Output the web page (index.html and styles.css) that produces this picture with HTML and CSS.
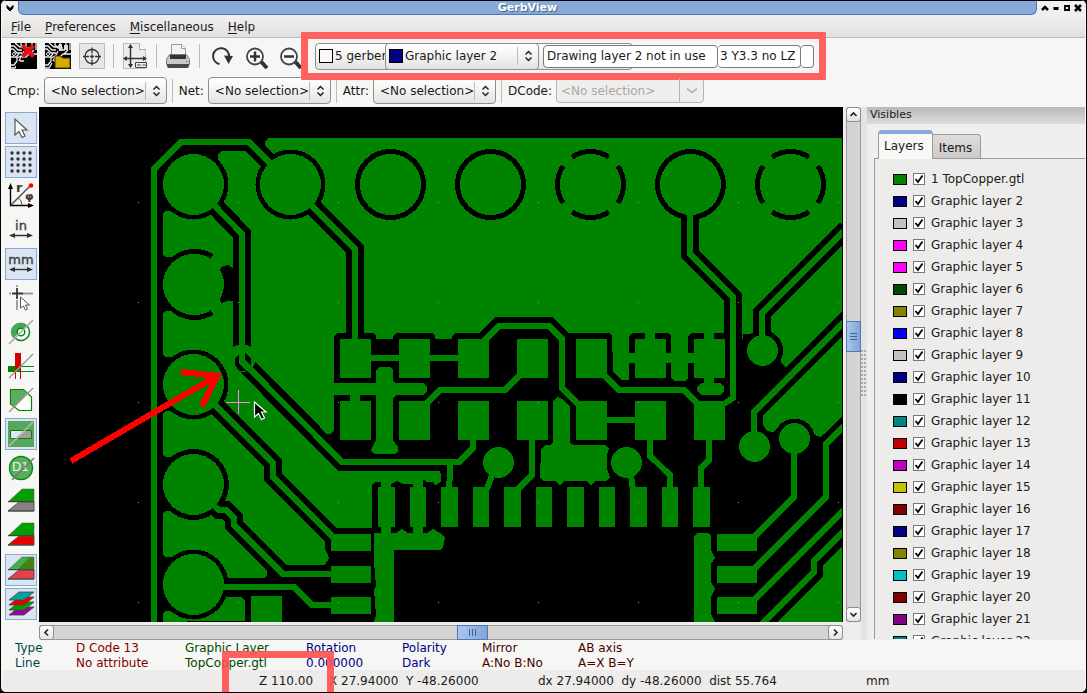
FILE: index.html
```
<!DOCTYPE html>
<html lang="en">
<head>
<meta charset="utf-8">
<title>GerbView</title>
<link rel="stylesheet" href="styles.css">
</head>
<body>
<svg class="defs" aria-hidden="true">
  <symbol id="updown" viewBox="0 0 9 12"><path d="M1.500 4.500 4.500 1.500 7.500 4.500M1.500 7.500 4.500 10.500 7.500 7.500" fill="none" stroke="#222" stroke-width="1.500"/></symbol>
  <symbol id="board" viewBox="0 0 26 26"><path fill="#000" d="M0 0h26v26H0z"/><path fill="none" stroke="#eee" stroke-width="1.300" d="M0 3h3l4 4h4M0 6h2l4 4h5M4 0l5 4h5M10 0v2l3 3M0 14h5l3-3M0 22h3l3-4v-3l4-2M0 25h4l3-5M13 8l-3 6-2 4M15 0v4M21 0v5M25 0v7M17 4v3h3M23 7l-4 4M11 14h4l3-3h8M9 18h4"/><circle cx="3" cy="11" r="1.500" fill="none" stroke="#eee"/><circle cx="14" cy="4" r="1.500" fill="none" stroke="#eee"/></symbol>
</svg>
<div class="window">
  <header class="titlebar">
    <button class="winbtn" aria-label="Window menu"><svg width="8" height="8" viewBox="0 0 8 8"><path d="M1 1.500 4 4.500 7 1.500V4L4 7 1 4z" fill="#000" stroke="#000"/></svg></button>
    <h1 class="title">GerbView</h1>
    <div class="wincontrols">
      <button class="winbtn" aria-label="Shade"><svg width="8" height="8" viewBox="0 0 8 8"><path d="M1 6 4 3 7 6" fill="none" stroke="#000" stroke-width="2.500"/></svg></button>
      <button class="winbtn" aria-label="Minimize"><svg width="8" height="8" viewBox="0 0 8 8"><path d="M1.500 3h5v3h-5z"/></svg></button>
      <button class="winbtn" aria-label="Maximize"><svg width="8" height="8" viewBox="0 0 8 8"><path d="M2 2h4v4H2z" fill="none" stroke="#000" stroke-width="2"/></svg></button>
      <button class="winbtn" aria-label="Close"><svg width="8" height="8" viewBox="0 0 8 8"><path d="M1 1 7 7M7 1 1 7" stroke="#000" stroke-width="2.500"/></svg></button>
    </div>
  </header>

  <nav class="menubar">
    <button class="menu"><u>F</u>ile</button>
    <button class="menu"><u>P</u>references</button>
    <button class="menu"><u>M</u>iscellaneous</button>
    <button class="menu"><u>H</u>elp</button>
  </nav>

  <div class="toolbar">
    <button class="tool" aria-label="Erase all layers"><svg viewBox="0 0 26 26"><use href="#board"/><path d="M5 26v-5l2-2h16l3 3v4z"/><path d="M10 4l3-3 4 4 4-4 3 3-4 4 4 4-3 3-4-4-4 4-3-3 4-4z" fill="#e81010"/></svg></button>
    <button class="tool" aria-label="Load gerber file"><svg viewBox="0 0 26 26"><use href="#board"/><path d="M10 13h6l1.500 2H25v10H10z" fill="#d6ab00" stroke="#3c3000"/><path d="M14 1h3v7h-3zM19 2h4v5h-4z" fill="#ddd"/></svg></button>
    <button class="tool" aria-label="Set page"><svg viewBox="0 0 26 26"><path d="M.5.500h25v25H.5z" fill="#e6e6e6" stroke="#bbb"/><circle cx="13" cy="13.500" r="7" fill="none" stroke="#333" stroke-width="1.300"/><path d="M13 4.500v6M13 16.500v6M4 13.500h6M16 13.500h6M11 13.500h4M13 11.500v4" stroke="#333" stroke-width="1.300"/></svg></button>
    <span class="sep"></span>
    <button class="tool" aria-label="Page settings"><svg viewBox="0 0 26 26"><path d="M1.500.500h16l6 6v19h-22z" fill="#ececec" stroke="#bbb"/><path d="M17.500.500v6h6" fill="#fff" stroke="#aaa"/><path d="M8.500 2v22M2 15.500h22" stroke="#333" stroke-width="1.500"/><path d="M8.500 1 6 5h5zM8.500 25 6 21h5zM1 15.500l4-2.500v5zM25 15.500 21 13v5z" fill="#333"/><path d="M13.500 19.500h11v5h-11zM15 22h4M20.500 22h3" stroke="#444" fill="#eee"/></svg></button>
    <span class="sep"></span>
    <button class="tool" aria-label="Print"><svg viewBox="0 0 26 26"><path d="M6.500 14V1.500h10l4 4V14z" fill="#f2f2f2" stroke="#999"/><path d="M16.500 1.500v4h4" fill="#fff" stroke="#999"/><path d="M4.500 11.500h17l3 5v5h-23v-5z" fill="#c9c9c9" stroke="#777"/><path d="M5 12h16v4H5z" fill="#333"/><path d="M2 21h22v2q0 2-2 2H4q-2 0-2-2z" fill="#4a4a4a"/><path d="M21 18.500h2" stroke="#5c2"/></svg></button>
    <span class="sep"></span>
    <div class="zoomtools">
      <button class="tool" aria-label="Redraw"><svg viewBox="0 0 26 26"><path d="M9.500 21A8 8 0 1 1 19 14" fill="none" stroke="#333" stroke-width="2"/><path d="M14 12.500 23 13l-4.500 8z" fill="#333"/></svg></button>
      <button class="tool" aria-label="Zoom in"><svg viewBox="0 0 26 26"><path d="M16.500 18 23 25" stroke="#333" stroke-width="4"/><circle cx="11" cy="13.500" r="8" fill="#fafafa" stroke="#444" stroke-width="1.800"/><path d="M6 13.500h10M11 8.500v10" stroke="#333" stroke-width="2.500"/></svg></button>
      <button class="tool" aria-label="Zoom out"><svg viewBox="0 0 26 26"><path d="M16.500 18 23 25" stroke="#333" stroke-width="4"/><circle cx="11" cy="13.500" r="8" fill="#fafafa" stroke="#444" stroke-width="1.800"/><path d="M6 13.500h10" stroke="#333" stroke-width="2.500"/></svg></button>
    </div>

    <div class="layerbar">
      <label class="combo combo-files"><i class="chip chip-white"></i><select aria-label="Gerber files"><option>5 gerber files</option></select></label>
      <label class="combo combo-layer"><i class="chip c-navy"></i><select aria-label="Active layer"><option>Graphic layer 2</option></select><svg class="arrows"><use href="#updown"/></svg></label>
      <input class="field field-info" aria-label="Layer info" value="Drawing layer 2 not in use">
      <input class="field field-format" aria-label="Format" value="3 Y3.3 no LZ">
      <input class="field field-end" aria-label="Extra">
    </div>
  </div>

  <div class="selectbar">
    <label class="lbl" for="cmp">Cmp:</label>
    <span class="combo combo-sel"><select id="cmp"><option>&lt;No selection&gt;</option></select><svg class="arrows"><use href="#updown"/></svg></span>
    <span class="sep"></span>
    <label class="lbl" for="net">Net:</label>
    <span class="combo combo-sel"><select id="net"><option>&lt;No selection&gt;</option></select><svg class="arrows"><use href="#updown"/></svg></span>
    <span class="sep"></span>
    <label class="lbl" for="attr">Attr:</label>
    <span class="combo combo-sel"><select id="attr"><option>&lt;No selection&gt;</option></select><svg class="arrows"><use href="#updown"/></svg></span>
    <span class="sep"></span>
    <label class="lbl" for="dcode">DCode:</label>
    <span class="combo combo-off"><select id="dcode" disabled><option>&lt;No selection&gt;</option></select><svg class="arrows" viewBox="0 0 12 12"><path d="M1 4 6 8 11 4" fill="none" stroke="#aaa" stroke-width="1.500"/></svg></span>
  </div>

  <main class="main">
    <div class="sidebar">
      <button class="side on" aria-label="Select"><svg viewBox="0 0 26 26"><path d="M7 4v16l4-3.500 3 6 3-1.500-3-6h5z" fill="#fff" stroke="#555" stroke-width="1.200"/></svg></button>
      <button class="side on" aria-label="Grid"><svg viewBox="0 0 26 26"><path d="M4 4h20M4 10h20M4 16h20M4 22h20" stroke="#333" stroke-width="3.400" stroke-linecap="round" stroke-dasharray="0.010 6"/></svg></button>
      <button class="side" aria-label="Polar coordinates"><svg viewBox="0 0 26 26"><path d="M2.500 23V3M2 22.500h22" stroke="#000" stroke-width="1.400"/><path d="M2.500 0 0 6h5zM26 22.500 20 20v5z"/><path d="M3 22 22 3" stroke="#555" stroke-width="1.600"/><circle cx="23" cy="2.500" r="2.300" fill="#f00"/><path d="M10 15q4 2 4 7" fill="none" stroke="#555"/><text x="8" y="9" class="glyph">r</text><text x="17" y="17" class="glyph phi">φ</text></svg></button>
      <button class="side" aria-label="Inches"><svg viewBox="0 0 26 26"><text x="13" y="13" class="unit">in</text><path d="M3 18.500h20" stroke="#333" stroke-width="1.400"/><path d="M1 18.500 7 16v5zM25 18.500 19 16v5z" fill="#333"/></svg></button>
      <button class="side on" aria-label="Millimeters"><svg viewBox="0 0 26 26"><text x="13" y="13" class="unit">mm</text><path d="M3 18.500h20" stroke="#333" stroke-width="1.400"/><path d="M1 18.500 7 16v5zM25 18.500 19 16v5z" fill="#333"/></svg></button>
      <button class="side" aria-label="Cursor shape"><svg viewBox="0 0 26 26"><path d="M1 8.500h2M9 0v2M15 8.500h10M9 15v10" stroke="#999" stroke-width="1.800"/><path d="M4 8.500h11M9 3v11" stroke="#333" stroke-width="1.800"/><path d="M12.500 12v11l3-2 2 4 2-1-2-4h4z" fill="#fff" stroke="#555"/></svg></button>
      <button class="side" aria-label="Flashed items"><svg viewBox="0 0 26 26"><circle cx="13" cy="13" r="8.500" fill="#fff" stroke="#008c14" stroke-width="1.500"/><path d="M5 19A9 9 0 0 1 19 7z" fill="#4aa455"/><circle cx="13" cy="13" r="3.800" fill="#fff" stroke="#008c14" stroke-width="1.500"/><path d="M1 25 25 1" stroke="#aaa" stroke-width="1.600"/></svg></button>
      <button class="side" aria-label="Lines"><svg viewBox="0 0 26 26"><path d="M0 13h12v6H0z" fill="#008400"/><path d="M7 0h6v13l-6 6z" fill="#d40000"/><path d="M12 13.500h14M11 18.500h15" stroke="#008c14"/><path d="M7.500 17v9M12.500 12v14" stroke="#d40000"/><path d="M1 25 25 1" stroke="#999" stroke-width="1.400"/></svg></button>
      <button class="side" aria-label="Polygons"><svg viewBox="0 0 26 26"><path d="M2.500 2.500h13l8 7.500v13.500H11L2.500 17z" fill="#fff" stroke="#008400" stroke-width="1.200"/><path d="M3 3h12.500l4 4L6.500 20 3 17z" fill="#5cad60"/><path d="M1 25 25 1" stroke="#999" stroke-width="1.400"/></svg></button>
      <button class="side on" aria-label="Negative objects"><svg viewBox="0 0 26 26"><path d="M0 0h26v26H0z" fill="#56a660"/><path d="M2.500 9.500h21v8h-21z" fill="#dbe6f4" stroke="#008400"/><path d="M17 10h6v7H9.500z" fill="#a0a0a0"/><path d="M1 25 25 1" stroke="#b4b4b4" stroke-width="1.600"/></svg></button>
      <button class="side" aria-label="D codes"><svg viewBox="0 0 26 26"><circle cx="13" cy="13" r="11.500" fill="#5cad60" stroke="#008c14" stroke-width="1.400"/><text x="4" y="16" class="dcode">D1</text><path d="M4 25 26 3" stroke="#777" stroke-width="1.400"/></svg></button>
      <button class="side" aria-label="Raw mode"><svg viewBox="0 0 26 26"><path d="M0 22 11 13h15v9z" fill="#868282" stroke="#555"/><path d="M0 13 14 0h12v13z" fill="#00a000" stroke="#555" stroke-width=".5"/><path d="M0 12.500h26M0 22h26" stroke="#444" stroke-width="1.200"/></svg></button>
      <button class="side" aria-label="Stacked mode"><svg viewBox="0 0 26 26"><path d="M0 22 11 13h15v9z" fill="#e80000" stroke="#555"/><path d="M0 13 14 0h12v13z" fill="#00a000" stroke="#555" stroke-width=".5"/><path d="M0 12.500h26M0 22h26" stroke="#444" stroke-width="1.200"/></svg></button>
      <button class="side on" aria-label="Transparency mode"><svg viewBox="0 0 26 26"><path d="M0 22 11 13h15v9z" fill="#e84048" stroke="#555"/><path d="M0 13 14 0h12v13z" fill="#40b048" stroke="#555" stroke-width=".5"/><path d="M10 12 22 0h4v12z" fill="#448414"/><path d="M0 12.500h26M0 22h26" stroke="#444" stroke-width="1.200"/></svg></button>
      <button class="side on" aria-label="Layers manager"><svg viewBox="0 0 26 26" stroke="#444" stroke-width=".8"><path d="M1 24 11 16h15L16 24z" fill="#a000a0"/><path d="M1 19 11 11h15L16 19z" fill="#00a000"/><path d="M1 14 11 6h15L16 14z" fill="#e80000"/><path d="M1 9 11 1h15L16 9z" fill="#00a0a0"/></svg></button>
    </div>

    <div class="view">
      <svg class="canvas" viewBox="39 107 804 515" preserveAspectRatio="xMinYMin slice" role="img" aria-label="Top copper layer">
        <defs>
          <pattern id="grid" width="100" height="100" patternUnits="userSpaceOnUse"><path d="M38 2h1v1h-1z" fill="#969696"/></pattern>
          <path id="casedTraces" d="M154 630V169L181 142H249L275 168M212 203 242 234V361L342 462H459L473 448V438M300 194 355 249V345M212 402 273 463V477L335 539M212 504 219 510H226L234 518V525L283 574H335M215 587H294L312 605H335M690 205V254L733 297V398L716 409M762 345V313L846 229M754 440V412L848 318M365 358H465M478 347 499 326H549L562 339V388L582 408"/>
        </defs>
        <rect x="39" y="107" width="804" height="515"/>
        <g shape-rendering="crispEdges">
          <g class="cu">
            <path d="M269 138H842V314L791 366 786 367 781 363 779 350 753 334H743V339H334V431L330 434H327L345 462H436L441 474V482L436 485 432 482H427L424 480H420V484H408L403 484 397 481 391 484H372V528H336L325 540V548L329 558 325 565H286L267 570V576L264 578H232L225 596 229 597H241L245 600V621H172V211L193 184 218 165V154L221 151H245L262 167 275 160 265 147V141Z"/>
            <rect x="163" y="211" width="24" height="46" rx="4"/>
            <rect x="163" y="311" width="24" height="46" rx="4"/>
            <rect x="163" y="411" width="24" height="46" rx="4"/>
            <rect x="163" y="511" width="24" height="46" rx="4"/>
            <rect x="163" y="611" width="24" height="16" rx="4"/>
            <path d="M843 330 763 410V425L767 431 773 432 777 428H812L815 435 820 437 824 434 843 416Z"/>
          </g>
          <g>
            <path d="M221 267 228 265 233 268V301L227 301 221 303 216 285Z"/>
            <path d="M334 336 337 333H373L376 336V349H393V336L396 333H433L435 336V349H452V336L455 333H556V384H334ZM565 333H609L612 336V384H565ZM325 528H374V550H325ZM629 336 632 333H668L671 336V384H629ZM688 336 691 333H730V384H688Z"/>
          </g>
          <circle cx="193.500" cy="184.500" r="35"/><circle cx="290.500" cy="184.500" r="35"/><circle cx="193.500" cy="384.500" r="35"/><circle cx="193.500" cy="484.500" r="35.500"/><circle cx="193.500" cy="584.500" r="35"/><circle cx="690.500" cy="184.500" r="35.500"/><circle cx="762.500" cy="350.500" r="20.500"/><circle cx="794.500" cy="438.500" r="20"/>
          <use href="#casedTraces" class="casing"/>
          <g class="ring">
            <circle cx="390.500" cy="184.500" r="33"/><circle cx="490.500" cy="184.500" r="33"/>
            <circle cx="590.500" cy="184.500" r="33" pathLength="360" stroke-dasharray="68 22" stroke-dashoffset="34"/>
            <circle cx="790.500" cy="184.500" r="33" pathLength="360" stroke-dasharray="68 22" stroke-dashoffset="34"/>
            <path d="M212 256.500A33 33 0 1 0 212 312.500"/>
          </g>
          <use href="#casedTraces" class="trace"/>
          <path class="trace" d="M522 373 505 390H440L425 405M602 373 619 390H684L701 407M600 420H640M450 463V472L449 490M493 473 486 491M532 435V475L517 490M650 435V456L670 475V490M709 435V460L701 468V490M631 475 633 490M794 445V497L750 541M846 424 826 444V497L750 573M846 508 750 604M846 529 814 561V572L760 626"/>
          <g class="cu">
            <circle cx="193.500" cy="184.500" r="30.500"/><circle cx="193.500" cy="284.500" r="30.500"/><circle cx="193.500" cy="384.500" r="30.500"/><circle cx="193.500" cy="484.500" r="30.500"/><circle cx="193.500" cy="584.500" r="30.500"/><circle cx="290.500" cy="184.500" r="30.500"/><circle cx="690.500" cy="184.500" r="30.500"/>
            <circle cx="762.500" cy="350.500" r="15.500"/><circle cx="754.500" cy="446.500" r="15.500"/><circle cx="794.500" cy="438.500" r="15.500"/><circle cx="498.500" cy="462.500" r="15.500"/><circle cx="626.500" cy="462.500" r="15.500"/>
            <path d="M340 339h31v39h-31zM399 339h31v39h-31zM458 339h31v39h-31zM517 339h31v39h-31zM576 339h31v39h-31zM635 339h31v39h-31zM694 339h31v39h-31zM399 401h31v39h-31zM458 401h31v39h-31zM517 401h31v39h-31zM576 401h31v39h-31zM635 401h31v39h-31zM694 401h31v39h-31z"/>
            <path d="M378 487h17v40h-17zM410 487h16v40h-16zM441 487h17v40h-17zM473 487h16v40h-16zM504 487h17v40h-17zM536 487h16v40h-16zM567 487h17v40h-17zM599 487h16v40h-16zM630 487h17v40h-17zM662 487h16v40h-16zM693 487h17v40h-17z"/>
            <path d="M331 534h40v17h-40zM331 566h40v17h-40zM331 597h40v17h-40zM717 534h40v17h-40zM717 566h40v17h-40zM717 597h40v17h-40zM251 596h31v26h-31z"/>
            <path d="M612 331H629V380H621L613 372ZM671 331H688V378L685 381H674L671 378ZM645 331h10v10h-10zM704 331h10v10h-10zM628 353h9v10h-9zM664 353h8v10h-8zM687 353h9v10h-9zM704 376h10v8h-10z"/>
            <path d="M701 383H720L724 387V391L720 395H701L697 391V387Z"/>
            <path d="M328 383H376V370L380 367H390L393 370V381L396 383H424L427 387V391L424 395H397L393 398V440L398 447V452L395 454H374L371 450V446L376 440V395H334V410H328Z"/>
            <path d="M553 401 558 397 564 400 570 407V443L574 445H606L609 449 607 455V468L610 478 606 481H596L591 485 586 481H565L560 485 555 481H543L540 478 541 449 545 445H550L553 442Z"/>
            <path d="M381 480h10v60h-10zM413 480h10v60h-10zM374 533H396L402 529 408 533H427L433 529 440 533 445 537 443 548 440 550H394V622H374L376 615 374 590 376 586 374 562Z"/>
            <path d="M694 622V536L697 533H708L711 536V550L715 558 711 564V582L715 589 711 597V614L715 622ZM843 545 823 565V576L777 622H843Z"/>
          </g>
          <path d="M334 398 337 395H350V401H340V415H334ZM360 395H373L376 398V415H371V401H360ZM334 425H340V440H371V425H376V440L371 450H334ZM372 486 375 482H381V487H378V502H372ZM372 512H378V527H381V533H372Z"/>
          <path class="cu" d="M340 401h31v39h-31zM350 394h10v10h-10z"/>
          <circle class="cu" cx="242" cy="358" r="14"/>
          <path d="M239 354 235 358V365L239 371H246L239 364ZM245 353 251 359V366L245 360Z"/>
          <path d="M233 345v-7h6v7zM245 345v-7h6v7z"/>
        </g>
        <rect x="39" y="107" width="804" height="515" fill="url(#grid)"/>
        <path d="M842 107h1v515h-1z"/>
        <path d="M226 402.500h24M238.500 390v24" stroke="#ff84ff"/>
        <path d="M254.500 402v15l4-3.500 3 6 3-1.500-3-6h4.500z" stroke="#fff" stroke-width="1.200"/>
        <path d="M71 461 215 377M181 372 217 376 202 406" fill="none" stroke="#f00" stroke-width="6" shape-rendering="crispEdges"/>
      </svg>
      <div class="vscroll">
        <button class="sbtn" aria-label="Scroll up"><svg width="9" height="9" viewBox="0 0 9 9"><path d="M1.500 6 4.500 3 7.500 6" fill="none" stroke="#222" stroke-width="1.600"/></svg></button>
        <span class="thumb thumb-v"></span>
        <button class="sbtn" aria-label="Scroll down"><svg width="9" height="9" viewBox="0 0 9 9"><path d="M1.500 3 4.500 6 7.500 3" fill="none" stroke="#222" stroke-width="1.600"/></svg></button>
      </div>
      <div class="hscroll">
        <button class="sbtn" aria-label="Scroll left"><svg width="9" height="9" viewBox="0 0 9 9"><path d="M6 1.500 3 4.500 6 7.500" fill="none" stroke="#222" stroke-width="1.600"/></svg></button>
        <span class="thumb thumb-h"></span>
        <button class="sbtn" aria-label="Scroll right"><svg width="9" height="9" viewBox="0 0 9 9"><path d="M3 1.500 6 4.500 3 7.500" fill="none" stroke="#222" stroke-width="1.600"/></svg></button>
      </div>
    </div>

    <div class="sash"><span class="grip"></span></div>

    <aside class="panel">
      <h2 class="caption">Visibles</h2>
      <div class="tabs">
        <button class="tab tab-on">Layers</button>
        <button class="tab">Items</button>
      </div>
      <div class="list">
        <label class="row"><i class="swatch c-green"></i><input type="checkbox" checked>1 TopCopper.gtl</label>
        <label class="row"><i class="swatch c-navy"></i><input type="checkbox" checked>Graphic layer 2</label>
        <label class="row"><i class="swatch c-silver"></i><input type="checkbox" checked>Graphic layer 3</label>
        <label class="row"><i class="swatch c-magenta"></i><input type="checkbox" checked>Graphic layer 4</label>
        <label class="row"><i class="swatch c-magenta"></i><input type="checkbox" checked>Graphic layer 5</label>
        <label class="row"><i class="swatch c-forest"></i><input type="checkbox" checked>Graphic layer 6</label>
        <label class="row"><i class="swatch c-olive"></i><input type="checkbox" checked>Graphic layer 7</label>
        <label class="row"><i class="swatch c-blue"></i><input type="checkbox" checked>Graphic layer 8</label>
        <label class="row"><i class="swatch c-silver"></i><input type="checkbox" checked>Graphic layer 9</label>
        <label class="row"><i class="swatch c-navy"></i><input type="checkbox" checked>Graphic layer 10</label>
        <label class="row"><i class="swatch c-black"></i><input type="checkbox" checked>Graphic layer 11</label>
        <label class="row"><i class="swatch c-teal"></i><input type="checkbox" checked>Graphic layer 12</label>
        <label class="row"><i class="swatch c-red"></i><input type="checkbox" checked>Graphic layer 13</label>
        <label class="row"><i class="swatch c-violet"></i><input type="checkbox" checked>Graphic layer 14</label>
        <label class="row"><i class="swatch c-yellow"></i><input type="checkbox" checked>Graphic layer 15</label>
        <label class="row"><i class="swatch c-maroon"></i><input type="checkbox" checked>Graphic layer 16</label>
        <label class="row"><i class="swatch c-navy"></i><input type="checkbox" checked>Graphic layer 17</label>
        <label class="row"><i class="swatch c-olive"></i><input type="checkbox" checked>Graphic layer 18</label>
        <label class="row"><i class="swatch c-cyan"></i><input type="checkbox" checked>Graphic layer 19</label>
        <label class="row"><i class="swatch c-maroon"></i><input type="checkbox" checked>Graphic layer 20</label>
        <label class="row"><i class="swatch c-purple"></i><input type="checkbox" checked>Graphic layer 21</label>
        <label class="row"><i class="swatch c-teal"></i><input type="checkbox" checked>Graphic layer 22</label>
      </div>
    </aside>
  </main>

  <div class="messages">
    <p class="msg m-teal">Type<br>Line</p>
    <p class="msg m-red">D Code 13<br>No attribute</p>
    <p class="msg m-green">Graphic Layer<br>TopCopper.gtl</p>
    <p class="msg m-blue">Rotation<br>0.000000</p>
    <p class="msg m-blue">Polarity<br>Dark</p>
    <p class="msg m-brown">Mirror<br>A:No B:No</p>
    <p class="msg m-brown">AB axis<br>A=X B=Y</p>
  </div>

  <footer class="status">
    <span class="zoom">Z 110.00</span>
    <span>X 27.94000&nbsp; Y -48.26000</span>
    <span>dx 27.94000&nbsp; dy -48.26000&nbsp; dist 55.764</span>
    <span>mm</span>
  </footer>
</div>
</body>
</html>
```

FILE: styles.css
```
*, *::before, *::after { box-sizing: border-box; }

html, body { height: 100%; margin: 0; }

body {
  background: #000;
  font: 12px/14px "DejaVu Sans", sans-serif;
  color: #1a1a1a;
  overflow: hidden;
}

button, input, select { font: inherit; color: inherit; margin: 0; padding: 0; border: 0; background: none; border-radius: 0; }
h1, h2, p { margin: 0; font: inherit; }
svg { display: block; }
.defs { position: absolute; width: 0; height: 0; }

.window {
  height: 100vh;
  display: grid;
  grid-template-rows: 15px 23px 36px 33px minmax(0, 1fr) 30px 22px;
  background: #f6f6f4;
  border: 1px solid #000;
  border-top: 0;
  border-radius: 6px;
  overflow: hidden;
  padding: 0 1px;
}

/* title bar */
.titlebar { display: flex; border-top: 1px solid #000; background: #f0efed; margin: 0 -1px; }
.winbtn { width: 11px; display: grid; place-items: center; }
.titlebar > .winbtn { width: 17px; }
.title {
  flex: 1;
  background: #86abd9;
  border: 1px solid #4b76b4;
  border-top: 0;
  border-radius: 0 0 6px 6px;
  text-align: center;
  font-weight: bold;
  font-size: 11px;
  line-height: 14px;
  color: #fff;
  text-shadow: 1px 1px 1px #3d5f8c;
}
.wincontrols { display: flex; width: 49px; padding-left: 2px; }

/* menus */
.menubar {
  display: flex;
  gap: 14px;
  padding: 1px 0 0 9px;
  background: linear-gradient(#f1f0ef, #e1e0de);
  border-bottom: 1px solid #bbb;
}
u { text-underline-offset: 2px; }

/* toolbars */
.toolbar { display: flex; align-items: center; padding-left: 9px; gap: 8px; }
.tool { width: 26px; height: 26px; }
.tool svg { width: 26px; height: 26px; }
.zoomtools { display: flex; gap: 8px; margin-left: 2px; }
.sep { width: 1px; height: 24px; background: #bdbcba; }

.layerbar { position: relative; display: flex; align-items: center; margin-left: 3px; }
.layerbar::after {
  content: "";
  position: absolute;
  inset: -11px -12px -10px -14px;
  border: 7px solid #ff6161;
  border-radius: 1px;
  pointer-events: none;
}

.combo { display: grid; align-items: center; height: 27px; }
.combo > * { grid-row: 1; grid-column: 1; }
.combo select {
  appearance: none;
  width: 100%;
  height: 100%;
  border: 1px solid #8f8e8c;
  border-radius: 4px;
  background: linear-gradient(#fff, #f3f2f1 50%, #e4e3e1);
  padding-left: 6px;
}
.arrows {
  justify-self: end;
  z-index: 1;
  width: 22px;
  height: 18px;
  padding: 3px 0;
  border-left: 1px solid #bbb;
  pointer-events: none;
}
.chip { z-index: 1; width: 14px; height: 14px; margin-left: 4px; border: 1px solid #000; pointer-events: none; }
.chip-white { background: #fff6fb; }
.combo-files { width: 318px; }
.combo-layer { width: 154px; margin-left: -248px; z-index: 1; }
.combo-files select, .combo-layer select { padding-left: 19px; }

.field { height: 23px; border: 1px solid #7d7c7a; border-radius: 4px; background: #fff; padding: 0 3px; z-index: 1; }
.field-info { width: 175px; margin-left: 4px; }
.field-format { width: 83px; border-left: 0; padding: 0 2px; }
.field-end { width: 13px; border-left: 0; }

.selectbar { display: flex; align-items: center; padding-left: 6px; }
.selectbar .combo { width: 123px; margin: 0 5px 0 4px; }
.selectbar .sep { margin-right: 6px; }
.selectbar .combo-off { width: 148px; height: 25px; color: #a8a7a5; }
.combo-off select { background: #efeeec; border-color: #b5b4b2; padding-left: 4px; opacity: 1; }
.combo-off .arrows { width: 25px; height: 25px; padding: 6px; border-color: #b5b4b2; }

/* work area */
.main { display: grid; grid-template-columns: 37px minmax(0, 1fr) 6px 218px; min-height: 0; }
.sidebar { display: flex; flex-direction: column; gap: 2px; padding: 5px 2px 0 3px; }
.side { width: 32px; height: 32px; flex: none; border: 1px solid transparent; padding: 2px; }
.side svg { width: 26px; height: 26px; overflow: visible; }
.side.on { background: #dbe5f2; border-color: #86abd9; }
.glyph { font: bold 13px "DejaVu Sans", sans-serif; fill: #433; }
.phi { font-size: 11px; }
.unit { font: 13px "DejaVu Sans", sans-serif; fill: #444; stroke: #444; stroke-width: .4px; text-anchor: middle; }
.dcode { font: 12px "DejaVu Sans", sans-serif; fill: #e8f4e8; }

.view {
  display: grid;
  grid-template: minmax(0, 1fr) 15px / minmax(0, 1fr) 15px;
  gap: 3px;
  background: #eeedeb;
  min-height: 0;
}
.canvas { width: 100%; height: 100%; background: #000; }
.cu { fill: #008400; }
.casing { fill: none; stroke: #000; stroke-width: 18px; }
.trace { fill: none; stroke: #008400; stroke-width: 6px; }
.ring { fill: none; stroke: #000; stroke-width: 5px; }

.vscroll, .hscroll { display: flex; justify-content: space-between; background: #d5d4d2; border: 1px solid #9b9a98; border-radius: 3px; }
.vscroll { flex-direction: column; }
.sbtn { flex: none; width: 13px; height: 13px; display: grid; place-items: center; background: linear-gradient(#fff, #e6e5e3); outline: 1px solid #8f8e8c; border-radius: 2px; }
.thumb { background: linear-gradient(90deg, #a9c6ee, #7fa5d8); outline: 1px solid #4f79b3; display: grid; place-items: center; }
.thumb::after { content: ""; width: 7px; height: 7px; }
.thumb-v { height: 29px; margin: 201px 0 auto; }
.thumb-v::after { background: repeating-linear-gradient(#3c639b 0 1px, transparent 1px 3px); }
.thumb-h { width: 29px; margin-left: 62px; }
.thumb-h::after { background: repeating-linear-gradient(90deg, #3c639b 0 1px, transparent 1px 3px); }

.sash { display: grid; align-items: center; background: #e4e3e1; }
.grip { height: 48px; background: radial-gradient(circle at 1px 1px, #aaa 0 1px, transparent 1px) 0 0 / 3px 4px; }

/* layer panel */
.panel { display: grid; grid-template-rows: 17px 35px minmax(0, 1fr); background: #f0efed; min-height: 0; padding-bottom: 1px; }
.caption { background: linear-gradient(#bab9b8, #dddcda); padding-left: 3px; font-size: 11px; line-height: 15px; }
.tabs { display: flex; align-items: flex-end; margin-left: 7px; padding-left: 4px; border-bottom: 1px solid #9b9a98; }
.tab { height: 24px; padding: 3px 8px 0 6px; border: 1px solid #9b9a98; border-left: 0; border-bottom: 0; border-radius: 0 4px 0 0; background: linear-gradient(#dedddb, #cbcac8); }
.tab-on {
  height: 29px;
  padding: 0 8px 1px 5px;
  margin-bottom: -1px;
  border: 1px solid #9b9a98;
  border-top: 4px solid #86abd9;
  border-bottom: 0;
  border-radius: 4px 4px 0 0;
  background: #f8f8f7;
}
.list { overflow: hidden; margin-left: 7px; padding: 9px 0 0 18px; border-left: 1px solid #9b9a98; background: #edecea; }
.row { display: flex; align-items: center; height: 22px; }
.swatch { width: 14px; height: 11px; border: 1px solid #000; }
.row input {
  appearance: none;
  width: 12px;
  height: 12px;
  margin: 0 6px;
  border: 1px solid #777;
  background: #fff;
}
.row input:checked { background: #fff url("data:image/svg+xml,%3Csvg xmlns='http://www.w3.org/2000/svg' viewBox='0 0 10 10'%3E%3Cpath d='M1.500 5 4 8 8.500 1.500' fill='none' stroke='%23000' stroke-width='1.800'/%3E%3C/svg%3E") center / 10px 10px; }

.c-green { background: #008400; }
.c-navy { background: #000084; }
.c-silver { background: #c2c2c2; }
.c-magenta { background: #f0f; }
.c-forest { background: #004800; }
.c-olive { background: #848400; }
.c-blue { background: #00f; }
.c-black { background: #000; }
.c-teal { background: #008484; }
.c-red { background: #c20000; }
.c-violet { background: #c200c2; }
.c-yellow { background: #c2c200; }
.c-maroon { background: #840000; }
.c-cyan { background: #00c2c2; }
.c-purple { background: #840084; }

/* message panel and status bar */
.messages {
  display: grid;
  grid-template-columns: 61px 109px 121px 96px 80px 96px 1fr;
  padding: 1px 0 0 13px;
  line-height: 15px;
}
.m-teal { color: #004848; }
.m-red { color: #840000; }
.m-green { color: #004800; }
.m-blue { color: #000084; }
.m-brown { color: #480000; }

.status {
  display: grid;
  grid-template-columns: 70px 209px 328px 1fr;
  align-items: center;
  padding-left: 257px;
  background: #edecea;
  white-space: pre;
}
.zoom { position: relative; }
.zoom::after {
  content: "";
  position: absolute;
  inset: -23px auto -10px -37px;
  width: 112px;
  border: 7px solid rgb(255 80 80 / 90%);
  border-bottom-width: 4px;
  pointer-events: none;
}
```
